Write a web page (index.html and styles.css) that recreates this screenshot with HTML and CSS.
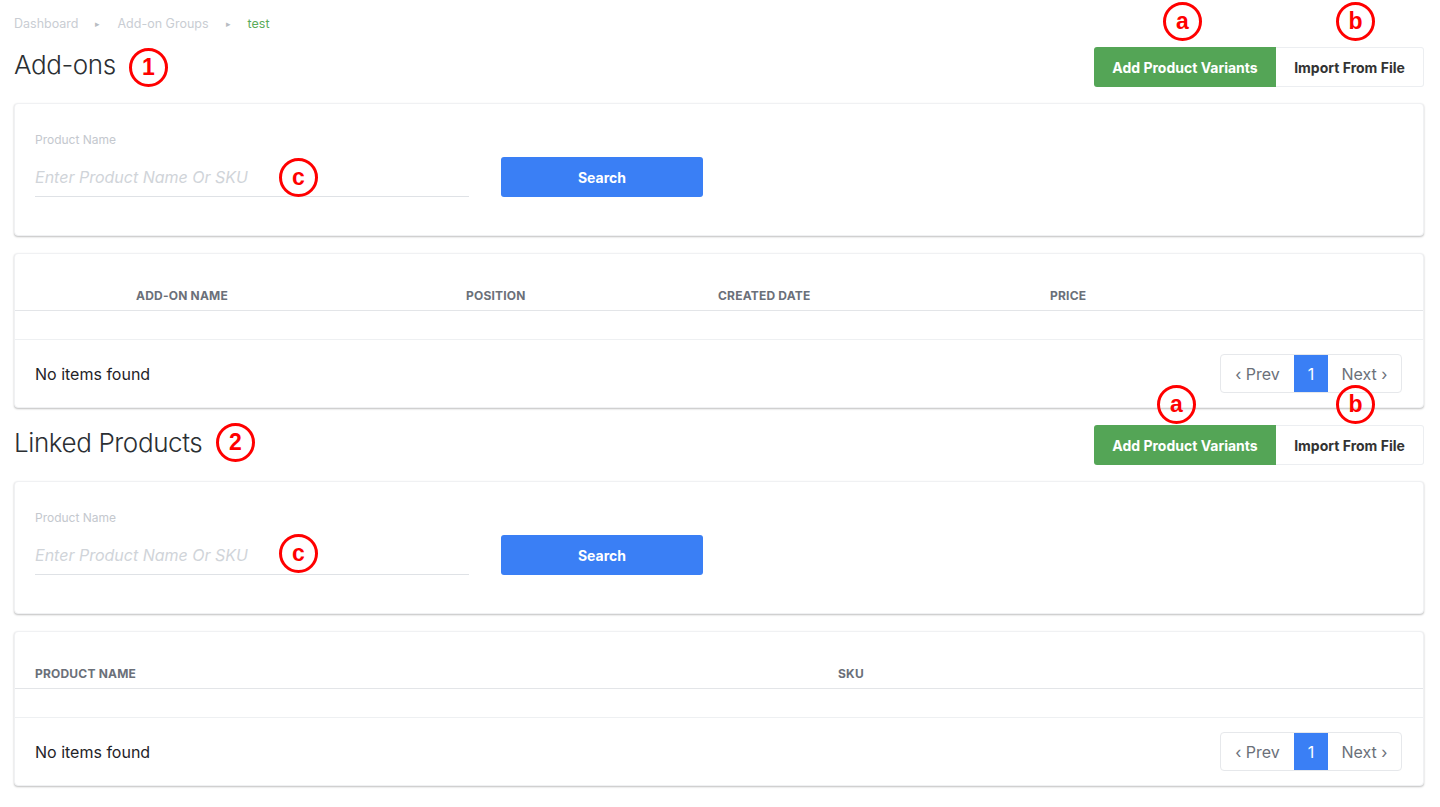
FILE: index.html
```html
<!DOCTYPE html>
<html lang="en">
<head>
    <meta charset="UTF-8">
    <meta name="viewport" content="width=device-width, initial-scale=1.0">
    <title>Add-ons</title>
    <link rel="stylesheet" href="styles.css">
</head>
<body>
    <div class="page">
        <nav class="breadcrumb">
            <span>Dashboard</span>
            <span class="sep">&#9656;</span>
            <span>Add-on Groups</span>
            <span class="sep">&#9656;</span>
            <span class="current">test</span>
        </nav>

        <!-- Add-ons -->
        <div class="title-row">
            <h1>Add-ons</h1>
            <div class="btn-group">
                <button class="btn btn-green">Add Product Variants</button>
                <button class="btn btn-white">Import From File</button>
            </div>
        </div>

        <div class="card search-card">
            <div class="form-group">
                <label>Product Name</label>
                <input type="text" placeholder="Enter Product Name Or SKU">
            </div>
            <button class="search-btn">Search</button>
        </div>

        <div class="card table-card">
            <div class="table-head addons-cols">
                <div class="th first">Add-on Name</div>
                <div class="th">Position</div>
                <div class="th">Created Date</div>
                <div class="th">Price</div>
            </div>
            <div class="table-empty"></div>
            <div class="table-foot">
                <span class="no-items">No items found</span>
                <div class="pager">
                    <span class="page-btn">&lsaquo; Prev</span>
                    <span class="page-btn active">1</span>
                    <span class="page-btn">Next &rsaquo;</span>
                </div>
            </div>
        </div>

        <!-- Linked Products -->
        <div class="title-row">
            <h1>Linked Products</h1>
            <div class="btn-group">
                <button class="btn btn-green">Add Product Variants</button>
                <button class="btn btn-white">Import From File</button>
            </div>
        </div>

        <div class="card search-card">
            <div class="form-group">
                <label>Product Name</label>
                <input type="text" placeholder="Enter Product Name Or SKU">
            </div>
            <button class="search-btn">Search</button>
        </div>

        <div class="card table-card">
            <div class="table-head products-cols">
                <div class="th">Product Name</div>
                <div class="th">SKU</div>
            </div>
            <div class="table-empty"></div>
            <div class="table-foot">
                <span class="no-items">No items found</span>
                <div class="pager">
                    <span class="page-btn">&lsaquo; Prev</span>
                    <span class="page-btn active">1</span>
                    <span class="page-btn">Next &rsaquo;</span>
                </div>
            </div>
        </div>
    </div>

    <!-- annotation markers -->
    <span class="mark" style="left: 129px; top: 48px;">1</span>
    <span class="mark" style="left: 1163px; top: 2px;">a</span>
    <span class="mark" style="left: 1336px; top: 2px;">b</span>
    <span class="mark" style="left: 279px; top: 158px;">c</span>
    <span class="mark" style="left: 1157px; top: 385px;">a</span>
    <span class="mark" style="left: 1336px; top: 385px;">b</span>
    <span class="mark" style="left: 216px; top: 423px;">2</span>
    <span class="mark" style="left: 279px; top: 534px;">c</span>
</body>
</html>
```

FILE: styles.css
```css
* {
    margin: 0;
    padding: 0;
    box-sizing: border-box;
}

body {
    font-family: Inter, "Noto Sans", Arial, sans-serif;
    background: #fff;
    color: #1f2328;
    position: relative;
    width: 1440px;
    height: 807px;
    overflow: hidden;
}

.page {
    padding: 0 16px 0 14px;
}

.breadcrumb {
    height: 47px;
    display: flex;
    align-items: center;
    gap: 14px;
    font-size: 12.5px;
    color: #c9cdd3;
}

.breadcrumb .sep {
    font-size: 9px;
    color: #b8bcc3;
    margin: 0 3px;
}

.breadcrumb .current {
    color: #5aab5a;
}

.title-row {
    height: 40px;
    display: flex;
    justify-content: space-between;
    align-items: center;
    margin-bottom: 16px;
}

h1 {
    font-size: 26px;
    font-weight: 300;
    color: #2b2f33;
    letter-spacing: -0.4px;
    margin-top: -6px;
}

.btn-group {
    display: flex;
    height: 40px;
}

.btn {
    font-family: inherit;
    font-size: 14px;
    font-weight: 700;
    border: none;
    cursor: pointer;
    height: 40px;
}

.btn-green {
    width: 182px;
    background: #54a556;
    color: #fff;
    border-radius: 3px 0 0 3px;
}

.btn-white {
    width: 148px;
    background: #fff;
    color: #333;
    border: 1px solid #eceef1;
    border-left: none;
    border-radius: 0 3px 3px 0;
}

.card {
    background: #fff;
    border-radius: 4px;
    border: 1px solid #f0f1f3;
    box-shadow: 0 1px 2px rgba(0,0,0,0.25);
    margin-bottom: 17px;
}

.search-card {
    height: 133px;
    display: flex;
    align-items: flex-end;
    gap: 32px;
    padding: 0 20px 38px;
}

.form-group {
    width: 434px;
    display: flex;
    flex-direction: column;
}

label {
    font-size: 12px;
    color: #c4c8ce;
    margin-bottom: 10px;
}

input {
    font-family: inherit;
    height: 40px;
    border: none;
    border-bottom: 1px solid #dfe2e6;
    font-size: 16px;
    outline: none;
    padding: 0;
}

input::placeholder {
    color: #d0d4d9;
    font-style: italic;
}

.search-btn {
    width: 202px;
    height: 40px;
    background: #3a7ff5;
    color: #fff;
    font-family: inherit;
    font-size: 14px;
    font-weight: 700;
    border: none;
    border-radius: 3px;
    cursor: pointer;
}

.table-card {
    height: 155px;
    display: flex;
    flex-direction: column;
}

.table-head {
    height: 57px;
    display: grid;
    align-items: end;
    padding-bottom: 7px;
    border-bottom: 1px solid #e3e5e8;
}

.addons-cols {
    grid-template-columns: 431px 252px 332px 1fr;
}

.products-cols {
    grid-template-columns: 803px 1fr;
}

.th {
    font-size: 12px;
    font-weight: 700;
    text-transform: uppercase;
    color: #6b7079;
    padding-left: 20px;
    letter-spacing: 0.2px;
}

.th.first {
    padding-left: 121px;
}

.table-empty {
    height: 29px;
    border-bottom: 1px solid #eef0f2;
}

.table-foot {
    flex: 1;
    display: flex;
    justify-content: space-between;
    align-items: center;
    padding: 0 21px 0 20px;
}

.no-items {
    font-size: 16px;
    color: #1f2328;
}

.pager {
    display: flex;
    height: 39px;
    border: 1px solid #e6e8eb;
    border-radius: 4px;
    overflow: hidden;
}

.page-btn {
    display: flex;
    align-items: center;
    justify-content: center;
    font-size: 16px;
    color: #6b7079;
    width: 73px;
}

.page-btn.active {
    width: 34px;
    background: #3a7ff5;
    color: #fff;
}

.mark {
    position: absolute;
    width: 39px;
    height: 39px;
    border: 3px solid #f00;
    border-radius: 50%;
    color: #f00;
    font-family: "Liberation Sans", Arial, sans-serif;
    font-weight: 700;
    font-size: 23px;
    display: flex;
    align-items: center;
    justify-content: center;
    background: transparent;
}
```
